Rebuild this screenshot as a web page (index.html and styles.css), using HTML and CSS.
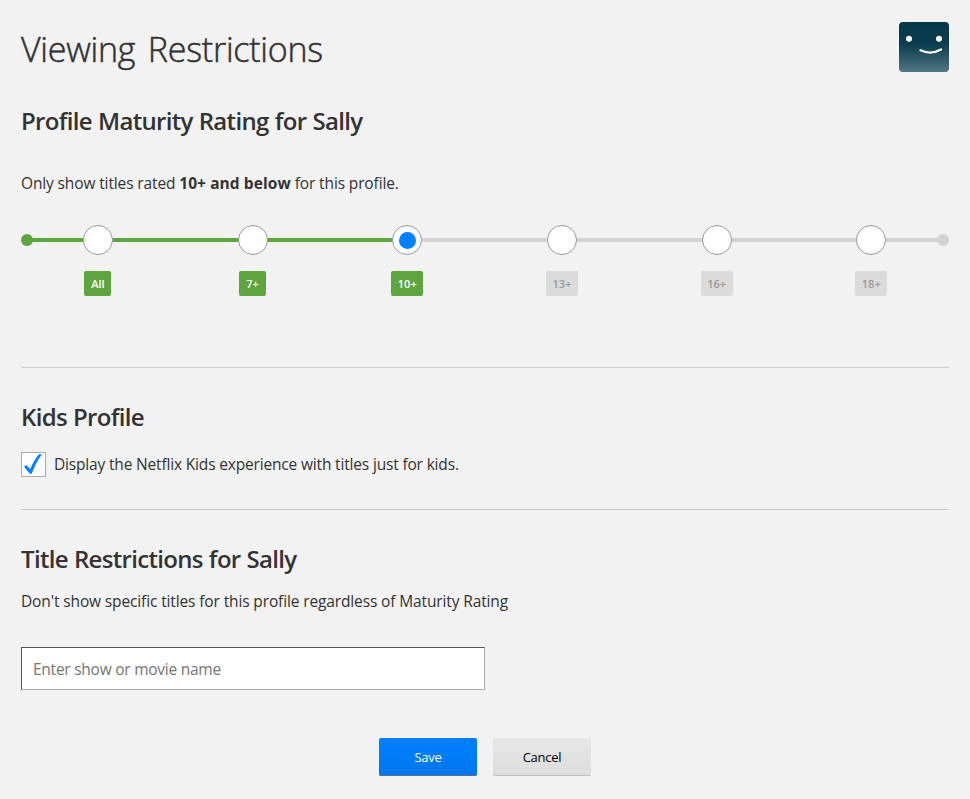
FILE: index.html
```html
<!DOCTYPE html>
<html lang="en">
<head>
<meta charset="utf-8">
<title>Viewing Restrictions</title>
<link rel="stylesheet" href="styles.css">
</head>
<body>
<main class="page">
  <header class="header">
    <h1 class="title">Viewing Restrictions</h1>
    <svg class="avatar" viewBox="0 0 50 50" role="img" aria-label="Sally">
      <defs><linearGradient id="sky" x1="0" y1="0" x2="0" y2="1"><stop offset="0" stop-color="#053647"/><stop offset=".45" stop-color="#0b3e4f"/><stop offset="1" stop-color="#527583"/></linearGradient></defs>
      <rect width="50" height="50" rx="4" fill="url(#sky)"/>
      <circle cx="10" cy="16.7" r="3" fill="#fff"/>
      <circle cx="40" cy="16.7" r="3" fill="#fff"/>
      <path d="M21.500 28.200Q32 33.200 42 27.500" fill="none" stroke="#fff" stroke-width="2.300" stroke-linecap="round"/>
    </svg>
  </header>

  <section class="section maturity">
    <h2 class="heading">Profile Maturity Rating for Sally</h2>
    <p class="text rated">Only show titles rated <b>10+ and below</b> for this profile.</p>
    <div class="slider">
      <div class="stop on first"><span class="knob"></span><span class="tag">All</span></div>
      <div class="stop on"><span class="knob"></span><span class="tag">7+</span></div>
      <div class="stop on current"><span class="knob"></span><span class="tag wide">10+</span></div>
      <div class="stop"><span class="knob"></span><span class="tag wide">13+</span></div>
      <div class="stop"><span class="knob"></span><span class="tag wide">16+</span></div>
      <div class="stop last"><span class="knob"></span><span class="tag wide">18+</span></div>
    </div>
  </section>

  <section class="section kids">
    <h2 class="heading">Kids Profile</h2>
    <label class="check-row">
      <span class="checkbox"><svg viewBox="0 0 23 23" width="23" height="23"><path d="M2 13.700 4.300 11.900 8.200 16.100C10.500 10.500 13.300 5.500 17 1.200L20 1.200C15.700 7 12.200 13.500 9.800 20.800L7.800 20.800Z" fill="#0080ff"/></svg></span>
      <span class="text display">Display the Netflix Kids experience with titles just for kids.</span>
    </label>
  </section>

  <section class="titles">
    <h2 class="heading">Title Restrictions for Sally</h2>
    <p class="text specific">Don't show specific titles for this profile regardless of Maturity Rating</p>
    <input class="search" type="text" placeholder="Enter show or movie name">
  </section>

  <div class="actions">
    <button class="button save">Save</button>
    <button class="button cancel">Cancel</button>
  </div>
</main>
</body>
</html>
```
FILE: styles.css
```css
* { box-sizing: border-box; }
body { margin: 0; background: #f2f2f2; color: #333; font-family: "Open Sans", "Noto Sans", sans-serif; }
h1, h2, p { margin: 0; }
.page { height: 799px; padding: 22px 21px 0; overflow: hidden; }
.header { display: flex; justify-content: space-between; height: 50px; }
.title { font-size: 34px; font-weight: 300; line-height: 54px; letter-spacing: -.25px; word-spacing: 4px; white-space: nowrap; -webkit-text-stroke: .5px #333; }
.avatar { width: 50px; height: 50px; }
.section { border-bottom: 1px solid #ccc; }
.heading { font-size: 24px; font-weight: 600; line-height: 32px; letter-spacing: -.68px; word-spacing: .5px; white-space: nowrap; }
.text { font-size: 15.5px; font-weight: 400; line-height: 24px; letter-spacing: -.13px; white-space: nowrap; }
.text b { font-weight: 700; letter-spacing: .08px; }
.display { letter-spacing: -.17px; }
.maturity { height: 296px; padding-top: 33px; }
.rated { margin-top: 34px; }
.slider { display: grid; grid-template-columns: repeat(6, 1fr); margin: 30px .4px 0 -.4px; }
.stop { position: relative; display: flex; flex-direction: column; align-items: center; }
.stop::before { content: ""; position: absolute; z-index: 0; top: 13px; right: 50%; width: 100%; height: 4px; background: #d4d4d4; }
.stop.on::before { background: #5fa53f; }
.stop.first::before { width: 71px; }
.last { background: linear-gradient(#d4d4d4, #d4d4d4) right 6px top 13px / 71px 4px no-repeat; }
.first::after, .last::after { content: ""; position: absolute; top: 9px; width: 12px; height: 12px; border-radius: 50%; background: #d4d4d4; }
.first::after { left: 0; background: #5fa53f; }
.last::after { right: 0; }
.knob { position: relative; z-index: 1; display: grid; place-items: center; width: 30px; height: 30px; border: 1px solid #999; border-radius: 50%; background: #fff; }
.current .knob::after { content: ""; width: 17px; height: 17px; border-radius: 50%; background: #0080ff; }
.tag { display: grid; place-items: center; width: 27px; height: 25px; margin-top: 16px; border-radius: 2px; background: #dbdbdb; color: #999; font-size: 11px; font-weight: 600; line-height: 25px; }
.tag.wide { width: 32px; }
.on .tag { background: #5fa53f; color: #fff; }
.kids { height: 142px; padding-top: 33px; }
.check-row { display: flex; gap: 8px; align-items: flex-start; height: 25px; margin-top: 19px; }
.checkbox { width: 25px; height: 25px; border: 1px solid #aaa; background: #fff; }
.checkbox svg { display: block; }
.titles { padding-top: 33px; }
.specific { margin-top: 14px; }
.search { display: block; width: 464px; height: 43px; margin-top: 34px; padding: 1px 11px 0; border: 1px solid; border-color: #555 #aaa #aaa #555; border-radius: 0; background: #fff; color: #333; font: 15.5px "Open Sans", "Noto Sans", sans-serif; letter-spacing: -.25px; }
.search::placeholder { color: #757575; opacity: 1; }
.actions { display: flex; justify-content: center; gap: 16px; margin-top: 48px; }
.button { width: 98px; height: 38px; padding: 0; border: 0; border-radius: 2px; font: 13px "Open Sans", "Noto Sans", sans-serif; letter-spacing: -.25px; }
.save { background: linear-gradient(#0080ff, #0077ee); color: #fff; box-shadow: inset 0 -1px #5a6f88; }
.cancel { background: linear-gradient(#e6e6e6, #ddd); color: #000; box-shadow: inset 0 -1px #bfbfbf; }
```
